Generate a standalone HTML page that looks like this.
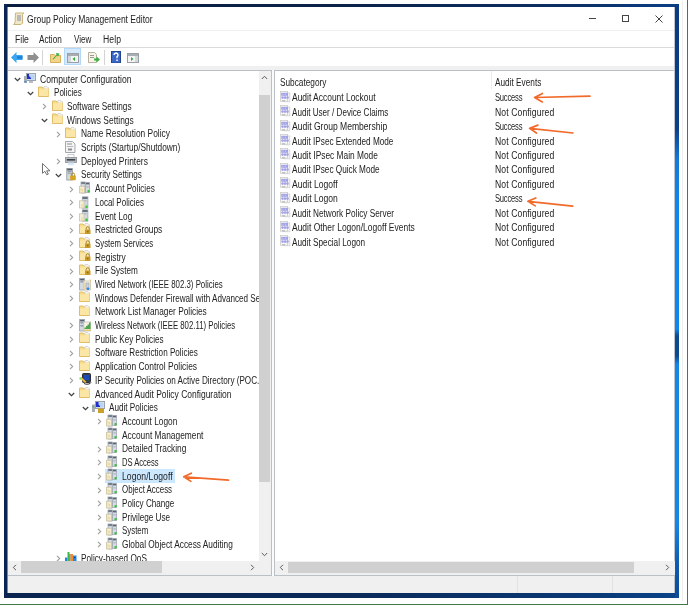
<!DOCTYPE html>
<html><head><meta charset="utf-8">
<style>
html,body{margin:0;padding:0;width:688px;height:605px;overflow:hidden;background:#fff;}
body{position:relative;font-family:"Liberation Sans",sans-serif;font-size:10px;letter-spacing:-0.27px;color:#1e1e1e;}
.a{position:absolute;}
.t{position:absolute;white-space:nowrap;line-height:13px;transform:scaleX(0.82);transform-origin:0 0;color:#222;}
</style></head><body>
<div class="a" style="left:687px;top:0;width:1px;height:605px;background:#3f7a48"></div>
<div class="a" style="left:0;top:604px;width:688px;height:1px;background:#3f7a48"></div>
<div class="a" style="left:682px;top:1px;width:1px;height:600px;background:#ededed"></div>
<!-- window frame -->
<div class="a" style="left:4px;top:4px;width:675px;height:3px;background:linear-gradient(90deg,#0b1d3f 0%,#0b2248 50%,#0b2f66 85%,#0a3f86 100%)"></div>
<div class="a" style="left:4px;top:4px;width:3px;height:594px;background:#0b2552"></div>
<div class="a" style="left:7px;top:7px;width:1px;height:586px;background:#7d8798"></div>
<div class="a" style="left:4px;top:593px;width:675px;height:5px;background:linear-gradient(90deg,#0b2450 0%,#0b2a58 50%,#0a3874 85%,#0a4488 100%)"></div>
<div class="a" style="left:675px;top:4px;width:4px;height:594px;background:linear-gradient(180deg,#0a3a80 0px,#0b3f88 125px,#137ad8 155px,#0f86ea 200px,#0f86ea 325px,#0c4a90 332px,#0c4a90 352px,#1486e6 360px,#1486e6 520px,#0d5cae 560px,#0a4a96 594px)"></div>
<div class="a" style="left:674px;top:7px;width:1px;height:586px;background:#7c8a9c;opacity:0.5"></div>
<div class="a" style="left:8px;top:7px;width:666px;height:586px;background:#fff;overflow:hidden">
  <!-- internal coords offset by 7 -->
  <div class="a" style="left:0;top:23px;width:668px;height:1px;background:#f0f0f0"></div>
  <div class="a" style="left:0;top:40px;width:668px;height:1px;background:#dadada"></div>
  <div class="a" style="left:0;top:59px;width:668px;height:4px;background:#f0f0f0"></div>
  <div class="a" style="left:0;top:569px;width:668px;height:17px;background:#f0f0f0"></div>
  <div class="a" style="left:509px;top:569px;width:1px;height:17px;background:#e2e2e2"></div>
  <div class="a" style="left:604px;top:569px;width:1px;height:17px;background:#e2e2e2"></div>
</div>
<div id="ov" style="position:absolute;left:0;top:0;width:688px;height:605px;will-change:transform">
<svg class="a" style="left:13px;top:12px" width="12" height="13" viewBox="0 0 12 13"><path d="M2.5 1 h8.5 l-1.5 1.5 v8.5 l-1.5 1.5 h-7.5 l1.5-1.5 z" fill="#f1e8c8" stroke="#c9b57a"/><rect x="4" y="3" width="4" height="6" fill="#b9b9b9"/></svg>
<div class="t" style="left:26.5px;top:12.5px;letter-spacing:0.000px;transform:scaleX(0.853);">Group Policy Management Editor</div>
<div class="a" style="left:589px;top:18px;width:7px;height:1px;background:#444"></div>
<div class="a" style="left:622px;top:15px;width:5px;height:5px;border:1px solid #444"></div>
<svg class="a" style="left:655px;top:15px" width="8" height="8" viewBox="0 0 8 8"><path d="M0.5 0.5 L7.5 7.5 M7.5 0.5 L0.5 7.5" stroke="#444" stroke-width="1"/></svg>
<div class="t" style="left:14.6px;top:33px;letter-spacing:0.000px;transform:scaleX(0.860);">File</div>
<div class="t" style="left:39px;top:33px;letter-spacing:0.000px;transform:scaleX(0.821);">Action</div>
<div class="t" style="left:74px;top:33px;letter-spacing:0.000px;transform:scaleX(0.809);">View</div>
<div class="t" style="left:103px;top:33px;letter-spacing:0.140px;transform:scaleX(0.860);">Help</div>
<svg class="a" style="left:11px;top:52px" width="12" height="11" viewBox="0 0 12 11"><path d="M0 5.5 L5.5 0 V3 H11.5 V8 H5.5 V11 Z" fill="#3aa6f2"/><rect x="6" y="4.2" width="5.5" height="2.5" fill="#1f7fd6"/></svg>
<svg class="a" style="left:27px;top:52px" width="12" height="11" viewBox="0 0 12 11"><path d="M12 5.5 L6.5 0 V3 H0.5 V8 H6.5 V11 Z" fill="#8f8f8f"/></svg>
<div class="a" style="left:42px;top:50px;width:1px;height:15px;background:#d4d4d4"></div>
<svg class="a" style="left:50px;top:52px" width="11" height="11" viewBox="0 0 11 11"><path d="M0.5 2.5 h4 l1 1 h5 v7 h-10 z" fill="#f3d58a" stroke="#d7b160"/><path d="M2.5 7 L6.5 3 L6 1 L9.5 1.5 L8 4.5 L7 3.5 L3.5 7.5 Z" fill="#3cb043"/></svg>
<div class="a" style="left:64px;top:48px;width:17px;height:17px;box-sizing:border-box;background:#d5ebfd;border:1px solid #b3d8f8"></div>
<svg class="a" style="left:67px;top:53px" width="12" height="10" viewBox="0 0 12 10"><rect x="0.5" y="0.5" width="11" height="9" fill="#f4f4f4" stroke="#9ba0a6"/><rect x="1" y="1" width="10" height="2" fill="#a9aeb4"/><rect x="1" y="3" width="3" height="6" fill="#d3d7db"/><path d="M8 4 L5.5 6 L8 8 Z" fill="#2fae3a"/></svg>
<svg class="a" style="left:88px;top:52px" width="12" height="11" viewBox="0 0 12 11"><path d="M0.5 0.5 h6 l2 2 v8 h-8 z" fill="#f7f3e6" stroke="#b9b2a0"/><rect x="2" y="3" width="4" height="1" fill="#9a9a9a"/><rect x="2" y="5" width="4" height="1" fill="#9a9a9a"/><path d="M6 6.5 h2.5 v-2 l3.5 3 l-3.5 3 v-2 h-2.5 z" fill="#3cb043"/></svg>
<div class="a" style="left:104px;top:50px;width:1px;height:15px;background:#d4d4d4"></div>
<svg class="a" style="left:111px;top:51px" width="10" height="12" viewBox="0 0 10 12"><rect x="0.5" y="0.5" width="9" height="11.5" fill="#3b68c6" stroke="#22448f"/><path d="M3 4 a2 2 0 1 1 3 1.8 v1.5" fill="none" stroke="#fff" stroke-width="1.4"/><rect x="5.3" y="8.5" width="1.5" height="1.5" fill="#fff"/></svg>
<svg class="a" style="left:127px;top:53px" width="12" height="10" viewBox="0 0 12 10"><rect x="0.5" y="0.5" width="11" height="9" fill="#f4f4f4" stroke="#9ba0a6"/><rect x="1" y="1" width="10" height="2" fill="#a9aeb4"/><rect x="8" y="3" width="3" height="6" fill="#d3d7db"/><path d="M4 4 L6.5 6 L4 8 Z" fill="#2fae3a"/></svg>
<div class="a" style="left:272px;top:70px;width:2px;height:506px;background:#fafafa"></div>
<div class="a" style="left:8px;top:70px;width:264px;height:506px;box-sizing:border-box;border:1px solid #b9c0c8;border-left:none"></div>
<div class="a" style="left:274px;top:70px;width:401px;height:506px;box-sizing:border-box;border:1px solid #b9c0c8;border-right:none"></div>
<div class="a" style="left:259px;top:71px;width:12px;height:490px;background:#f0f0f0"></div>
<div class="a" style="left:259px;top:95px;width:11px;height:387px;background:#d0d0d0"></div>
<svg class="a" style="left:261px;top:75px" width="7" height="5" viewBox="0 0 7 5"><path d="M0.8 4 L3.5 1.3 L6.2 4" fill="none" stroke="#5a5a5a" stroke-width="1.0"/></svg>
<svg class="a" style="left:261px;top:552px" width="7" height="5" viewBox="0 0 7 5"><path d="M0.8 1 L3.5 3.7 L6.2 1" fill="none" stroke="#5a5a5a" stroke-width="1.0"/></svg>
<div class="a" style="left:8px;top:561px;width:263px;height:14px;background:#f0f0f0"></div>
<div class="a" style="left:21px;top:561px;width:141px;height:12px;background:#d0d0d0"></div>
<svg class="a" style="left:12px;top:564px" width="5" height="7" viewBox="0 0 5 7"><path d="M4 0.8 L1.3 3.5 L4 6.2" fill="none" stroke="#5a5a5a" stroke-width="1.0"/></svg>
<svg class="a" style="left:250px;top:564px" width="5" height="7" viewBox="0 0 5 7"><path d="M1 0.8 L3.7 3.5 L1 6.2" fill="none" stroke="#5a5a5a" stroke-width="1.0"/></svg>
<div class="a" style="left:275px;top:561px;width:400px;height:14px;background:#f0f0f0"></div>
<div class="a" style="left:288px;top:562px;width:346px;height:11px;background:#d0d0d0"></div>
<svg class="a" style="left:279px;top:564px" width="5" height="7" viewBox="0 0 5 7"><path d="M4 0.8 L1.3 3.5 L4 6.2" fill="none" stroke="#5a5a5a" stroke-width="1.0"/></svg>
<svg class="a" style="left:665px;top:564px" width="5" height="7" viewBox="0 0 5 7"><path d="M1 0.8 L3.7 3.5 L1 6.2" fill="none" stroke="#5a5a5a" stroke-width="1.0"/></svg>
<div class="a" style="left:491px;top:71px;width:1px;height:18px;background:#ececec"></div>
<div class="t" style="left:280.2px;top:75.5px;letter-spacing:0.000px;transform:scaleX(0.827);">Subcategory</div>
<div class="t" style="left:495.3px;top:75.5px;letter-spacing:0.000px;transform:scaleX(0.825);">Audit Events</div><div class="a" style="left:7px;top:71px;width:252px;height:490px;overflow:hidden"><div class="a" style="left:-7px;top:-71px;width:688px;height:605px"><svg style="position:absolute;left:14px;top:77px" width="7" height="5" viewBox="0 0 7 5"><path d="M0.8 1 L3.5 3.7 L6.2 1" fill="none" stroke="#404040" stroke-width="1.2"/></svg>
<svg style="position:absolute;left:24px;top:73px" width="12" height="11" viewBox="0 0 12 11"><rect x="2.5" y="0.5" width="9" height="7" fill="#dfe6f0" stroke="#9aa3ad"/><rect x="3.5" y="1.5" width="7" height="5" fill="#b9d3f0"/><path d="M3 1 h2 v2 l2 2 v1 h-4 z" fill="#1f2fcc"/><rect x="0" y="3" width="3" height="7" fill="#a9aeb5"/><rect x="0.5" y="8" width="2" height="1.5" fill="#3c8ee8"/><rect x="5" y="8" width="4" height="2" fill="#b7bcc2"/></svg>
<div class="t" style="left:40.0px;top:72.6px;letter-spacing:0.013px;transform:scaleX(0.860);">Computer Configuration</div>
<svg style="position:absolute;left:27px;top:91px" width="7" height="5" viewBox="0 0 7 5"><path d="M0.8 1 L3.5 3.7 L6.2 1" fill="none" stroke="#404040" stroke-width="1.2"/></svg>
<svg style="position:absolute;left:38px;top:86px" width="12" height="11" viewBox="0 0 12 11"><path d="M0.5 1 h3.5 l1 1 h5.5 v8.5 h-10 z" fill="#f8dc86" stroke="#e0bd68" stroke-width="1"/><path d="M6 0.5 h3 l1.5 1.5 v1 h-4.5 z" fill="#f4f4f4" stroke="#c9c9c9" stroke-width="0.6"/><path d="M1 3.5 h4 l1-1 h4.5 v7.5 h-9.5 z" fill="#fbe6a6"/></svg>
<div class="t" style="left:53.7px;top:86.3px;letter-spacing:0.000px;transform:scaleX(0.806);">Policies</div>
<svg style="position:absolute;left:42px;top:103px" width="5" height="7" viewBox="0 0 5 7"><path d="M1 0.8 L3.7 3.5 L1 6.2" fill="none" stroke="#a0a0a0" stroke-width="1.1"/></svg>
<svg style="position:absolute;left:52px;top:100px" width="12" height="11" viewBox="0 0 12 11"><path d="M0.5 1 h3.5 l1 1 h5.5 v8.5 h-10 z" fill="#f8dc86" stroke="#e0bd68" stroke-width="1"/><path d="M6 0.5 h3 l1.5 1.5 v1 h-4.5 z" fill="#f4f4f4" stroke="#c9c9c9" stroke-width="0.6"/><path d="M1 3.5 h4 l1-1 h4.5 v7.5 h-9.5 z" fill="#fbe6a6"/></svg>
<div class="t" style="left:67.4px;top:100.0px;letter-spacing:0.000px;transform:scaleX(0.823);">Software Settings</div>
<svg style="position:absolute;left:41px;top:118px" width="7" height="5" viewBox="0 0 7 5"><path d="M0.8 1 L3.5 3.7 L6.2 1" fill="none" stroke="#404040" stroke-width="1.2"/></svg>
<svg style="position:absolute;left:52px;top:113px" width="12" height="11" viewBox="0 0 12 11"><path d="M0.5 1 h3.5 l1 1 h5.5 v8.5 h-10 z" fill="#f8dc86" stroke="#e0bd68" stroke-width="1"/><path d="M6 0.5 h3 l1.5 1.5 v1 h-4.5 z" fill="#f4f4f4" stroke="#c9c9c9" stroke-width="0.6"/><path d="M1 3.5 h4 l1-1 h4.5 v7.5 h-9.5 z" fill="#fbe6a6"/></svg>
<div class="t" style="left:67.4px;top:113.7px;letter-spacing:0.000px;transform:scaleX(0.839);">Windows Settings</div>
<svg style="position:absolute;left:56px;top:131px" width="5" height="7" viewBox="0 0 5 7"><path d="M1 0.8 L3.7 3.5 L1 6.2" fill="none" stroke="#a0a0a0" stroke-width="1.1"/></svg>
<svg style="position:absolute;left:65px;top:127px" width="12" height="11" viewBox="0 0 12 11"><path d="M0.5 1 h3.5 l1 1 h5.5 v8.5 h-10 z" fill="#f8dc86" stroke="#e0bd68" stroke-width="1"/><path d="M6 0.5 h3 l1.5 1.5 v1 h-4.5 z" fill="#f4f4f4" stroke="#c9c9c9" stroke-width="0.6"/><path d="M1 3.5 h4 l1-1 h4.5 v7.5 h-9.5 z" fill="#fbe6a6"/></svg>
<div class="t" style="left:81.1px;top:127.4px;letter-spacing:0.000px;transform:scaleX(0.838);">Name Resolution Policy</div>
<svg style="position:absolute;left:65px;top:141px" width="11" height="12" viewBox="0 0 11 12"><path d="M0.5 0.5 h7 l2.5 2.5 v8.5 h-9.5 z" fill="#f4f4f4" stroke="#a4a8ad"/><rect x="2" y="2.5" width="5" height="1" fill="#8c9096"/><rect x="2" y="5" width="6" height="1" fill="#b4b8bd"/><rect x="3" y="7.5" width="4" height="2" fill="#8c9096"/></svg>
<div class="t" style="left:81.1px;top:141.1px;letter-spacing:0.000px;transform:scaleX(0.830);">Scripts (Startup/Shutdown)</div>
<svg style="position:absolute;left:56px;top:158px" width="5" height="7" viewBox="0 0 5 7"><path d="M1 0.8 L3.7 3.5 L1 6.2" fill="none" stroke="#a0a0a0" stroke-width="1.1"/></svg>
<svg style="position:absolute;left:65px;top:154px" width="12" height="12" viewBox="0 0 12 12"><rect x="3" y="0.5" width="6" height="3" fill="#fff" stroke="#c0c4c8" stroke-width="0.8"/><rect x="0.4" y="3.5" width="11.2" height="5" fill="#b6bbc1" stroke="#8c9298" stroke-width="0.8"/><rect x="1.8" y="5" width="8.4" height="1.6" fill="#3e434a"/><rect x="3" y="8.5" width="6" height="2.8" fill="#d8e8f6"/></svg>
<div class="t" style="left:81.1px;top:154.7px;letter-spacing:0.000px;transform:scaleX(0.841);">Deployed Printers</div>
<svg style="position:absolute;left:55px;top:173px" width="7" height="5" viewBox="0 0 7 5"><path d="M0.8 1 L3.5 3.7 L6.2 1" fill="none" stroke="#404040" stroke-width="1.2"/></svg>
<svg style="position:absolute;left:65px;top:168px" width="12" height="13" viewBox="0 0 12 13"><rect x="1.8" y="0.4" width="5.6" height="11.6" fill="#d6dbe1" stroke="#8e969f" stroke-width="0.8"/><rect x="2.2" y="0.8" width="4.8" height="1.6" fill="#4e5662"/><rect x="2.6" y="3.4" width="4" height="0.9" fill="#6b7480"/><rect x="2.6" y="5.2" width="4" height="0.9" fill="#9aa3ad"/><rect x="5.2" y="7.6" width="5.6" height="4.6" rx="0.6" fill="#d4a521"/><path d="M6.4 7.8 v-1.2 a1.6 1.6 0 0 1 3.2 0 v1.2" fill="none" stroke="#b08616" stroke-width="1"/></svg>
<div class="t" style="left:81.1px;top:168.4px;letter-spacing:0.000px;transform:scaleX(0.812);">Security Settings</div>
<svg style="position:absolute;left:69px;top:186px" width="5" height="7" viewBox="0 0 5 7"><path d="M1 0.8 L3.7 3.5 L1 6.2" fill="none" stroke="#a0a0a0" stroke-width="1.1"/></svg>
<svg style="position:absolute;left:79px;top:181px" width="12" height="13" viewBox="0 0 12 13"><rect x="6.5" y="1.5" width="4" height="10" fill="#d6dce3" stroke="#a3abb5" stroke-width="0.8"/><rect x="6.8" y="1.8" width="3.4" height="1.6" fill="#5d6672"/><rect x="7.2" y="5.5" width="2.6" height="0.8" fill="#9aa4ae"/><rect x="2" y="1" width="4.2" height="11" fill="#cfd6de" stroke="#9fa8b2" stroke-width="0.8"/><rect x="2.3" y="1.3" width="3.6" height="1.5" fill="#5d6672"/><rect x="0.4" y="5.3" width="5" height="6.6" fill="#f4eedc" stroke="#cfc3a2" stroke-width="0.8"/><rect x="1.6" y="7" width="0.9" height="3.5" fill="#ecd27a"/><rect x="3.3" y="8" width="0.9" height="2.5" fill="#ecd27a"/><rect x="8.4" y="9" width="2.4" height="2.4" rx="0.8" fill="#3fc23f"/></svg>
<div class="t" style="left:94.8px;top:182.1px;letter-spacing:0.000px;transform:scaleX(0.814);">Account Policies</div>
<svg style="position:absolute;left:69px;top:199px" width="5" height="7" viewBox="0 0 5 7"><path d="M1 0.8 L3.7 3.5 L1 6.2" fill="none" stroke="#a0a0a0" stroke-width="1.1"/></svg>
<svg style="position:absolute;left:79px;top:196px" width="12" height="13" viewBox="0 0 12 13"><rect x="3.3" y="0.8" width="5.6" height="11.4" fill="#d3d9e0" stroke="#9fa8b2" stroke-width="0.8"/><rect x="3.6" y="1.1" width="5" height="1.8" fill="#5d6672"/><rect x="4.5" y="4.5" width="3" height="0.8" fill="#9aa4ae"/><rect x="0.4" y="4.8" width="4.6" height="7.2" fill="#f4eedc" stroke="#cfc3a2" stroke-width="0.8"/><rect x="2.6" y="8" width="0.9" height="3" fill="#ecd27a"/><rect x="6.3" y="9.6" width="2.4" height="2.4" rx="0.8" fill="#3fc23f"/></svg>
<div class="t" style="left:94.8px;top:195.8px;letter-spacing:0.000px;transform:scaleX(0.800);">Local Policies</div>
<svg style="position:absolute;left:69px;top:213px" width="5" height="7" viewBox="0 0 5 7"><path d="M1 0.8 L3.7 3.5 L1 6.2" fill="none" stroke="#a0a0a0" stroke-width="1.1"/></svg>
<svg style="position:absolute;left:79px;top:209px" width="12" height="13" viewBox="0 0 12 13"><rect x="3.3" y="0.8" width="5.6" height="11.4" fill="#d3d9e0" stroke="#9fa8b2" stroke-width="0.8"/><rect x="3.6" y="1.1" width="5" height="1.8" fill="#5d6672"/><rect x="4.5" y="4.5" width="3" height="0.8" fill="#9aa4ae"/><rect x="0.4" y="4.8" width="4.6" height="7.2" fill="#f4eedc" stroke="#cfc3a2" stroke-width="0.8"/><rect x="2.6" y="8" width="0.9" height="3" fill="#ecd27a"/><rect x="6.3" y="9.6" width="2.4" height="2.4" rx="0.8" fill="#3fc23f"/></svg>
<div class="t" style="left:94.8px;top:209.5px;letter-spacing:0.000px;transform:scaleX(0.827);">Event Log</div>
<svg style="position:absolute;left:69px;top:227px" width="5" height="7" viewBox="0 0 5 7"><path d="M1 0.8 L3.7 3.5 L1 6.2" fill="none" stroke="#a0a0a0" stroke-width="1.1"/></svg>
<svg style="position:absolute;left:79px;top:223px" width="12" height="11" viewBox="0 0 12 11"><path d="M0.5 1 h3.5 l1 1 h5.5 v8.5 h-10 z" fill="#f8dc86" stroke="#e0bd68" stroke-width="1"/><path d="M6 0.5 h3 l1.5 1.5 v1 h-4.5 z" fill="#f4f4f4" stroke="#c9c9c9" stroke-width="0.6"/><path d="M1 3.5 h4 l1-1 h4.5 v7.5 h-9.5 z" fill="#fbe6a6"/><rect x="6" y="6.5" width="5.5" height="4.5" fill="#c99a2a"/><path d="M7.2 6.5 v-1.2 a1.55 1.55 0 0 1 3.1 0 v1.2" fill="none" stroke="#9a7a2a" stroke-width="0.9"/><rect x="8.3" y="7.8" width="1" height="1.5" fill="#7a5a10"/></svg>
<div class="t" style="left:94.8px;top:223.2px;letter-spacing:0.000px;transform:scaleX(0.835);">Restricted Groups</div>
<svg style="position:absolute;left:69px;top:240px" width="5" height="7" viewBox="0 0 5 7"><path d="M1 0.8 L3.7 3.5 L1 6.2" fill="none" stroke="#a0a0a0" stroke-width="1.1"/></svg>
<svg style="position:absolute;left:79px;top:237px" width="12" height="11" viewBox="0 0 12 11"><path d="M0.5 1 h3.5 l1 1 h5.5 v8.5 h-10 z" fill="#f8dc86" stroke="#e0bd68" stroke-width="1"/><path d="M6 0.5 h3 l1.5 1.5 v1 h-4.5 z" fill="#f4f4f4" stroke="#c9c9c9" stroke-width="0.6"/><path d="M1 3.5 h4 l1-1 h4.5 v7.5 h-9.5 z" fill="#fbe6a6"/><rect x="6" y="6.5" width="5.5" height="4.5" fill="#c99a2a"/><path d="M7.2 6.5 v-1.2 a1.55 1.55 0 0 1 3.1 0 v1.2" fill="none" stroke="#9a7a2a" stroke-width="0.9"/><rect x="8.3" y="7.8" width="1" height="1.5" fill="#7a5a10"/></svg>
<div class="t" style="left:94.8px;top:236.9px;letter-spacing:0.000px;transform:scaleX(0.782);">System Services</div>
<svg style="position:absolute;left:69px;top:254px" width="5" height="7" viewBox="0 0 5 7"><path d="M1 0.8 L3.7 3.5 L1 6.2" fill="none" stroke="#a0a0a0" stroke-width="1.1"/></svg>
<svg style="position:absolute;left:79px;top:250px" width="12" height="11" viewBox="0 0 12 11"><path d="M0.5 1 h3.5 l1 1 h5.5 v8.5 h-10 z" fill="#f8dc86" stroke="#e0bd68" stroke-width="1"/><path d="M6 0.5 h3 l1.5 1.5 v1 h-4.5 z" fill="#f4f4f4" stroke="#c9c9c9" stroke-width="0.6"/><path d="M1 3.5 h4 l1-1 h4.5 v7.5 h-9.5 z" fill="#fbe6a6"/><rect x="6" y="6.5" width="5.5" height="4.5" fill="#c99a2a"/><path d="M7.2 6.5 v-1.2 a1.55 1.55 0 0 1 3.1 0 v1.2" fill="none" stroke="#9a7a2a" stroke-width="0.9"/><rect x="8.3" y="7.8" width="1" height="1.5" fill="#7a5a10"/></svg>
<div class="t" style="left:94.8px;top:250.6px;letter-spacing:0.000px;transform:scaleX(0.839);">Registry</div>
<svg style="position:absolute;left:69px;top:268px" width="5" height="7" viewBox="0 0 5 7"><path d="M1 0.8 L3.7 3.5 L1 6.2" fill="none" stroke="#a0a0a0" stroke-width="1.1"/></svg>
<svg style="position:absolute;left:79px;top:264px" width="12" height="11" viewBox="0 0 12 11"><path d="M0.5 1 h3.5 l1 1 h5.5 v8.5 h-10 z" fill="#f8dc86" stroke="#e0bd68" stroke-width="1"/><path d="M6 0.5 h3 l1.5 1.5 v1 h-4.5 z" fill="#f4f4f4" stroke="#c9c9c9" stroke-width="0.6"/><path d="M1 3.5 h4 l1-1 h4.5 v7.5 h-9.5 z" fill="#fbe6a6"/><rect x="6" y="6.5" width="5.5" height="4.5" fill="#c99a2a"/><path d="M7.2 6.5 v-1.2 a1.55 1.55 0 0 1 3.1 0 v1.2" fill="none" stroke="#9a7a2a" stroke-width="0.9"/><rect x="8.3" y="7.8" width="1" height="1.5" fill="#7a5a10"/></svg>
<div class="t" style="left:94.8px;top:264.3px;letter-spacing:0.000px;transform:scaleX(0.820);">File System</div>
<svg style="position:absolute;left:69px;top:281px" width="5" height="7" viewBox="0 0 5 7"><path d="M1 0.8 L3.7 3.5 L1 6.2" fill="none" stroke="#a0a0a0" stroke-width="1.1"/></svg>
<svg style="position:absolute;left:79px;top:278px" width="13" height="13" viewBox="0 0 13 13"><rect x="0.6" y="0.4" width="5" height="11.6" fill="#d4dae2" stroke="#9aa2ab" stroke-width="0.8"/><rect x="1.1" y="0.9" width="4" height="1.5" fill="#5a6270"/><rect x="1.4" y="3.4" width="3.4" height="0.9" fill="#6c7582"/><rect x="4.8" y="3" width="6.6" height="9" fill="#f7f2e6" stroke="#cdc4aa" stroke-width="0.8"/><rect x="7" y="5" width="3" height="6" fill="#c9d3de" stroke="#9aa2ab" stroke-width="0.6"/><circle cx="9" cy="10.8" r="1.4" fill="#2f86e0"/><path d="M6 11.5 V4.5 M11.5 3 a1.5 1.5 0 0 0 -1 -1.8" fill="none" stroke="#e3c66a" stroke-width="0.9"/></svg>
<div class="t" style="left:94.8px;top:277.9px;letter-spacing:0.000px;transform:scaleX(0.784);">Wired Network (IEEE 802.3) Policies</div>
<svg style="position:absolute;left:69px;top:295px" width="5" height="7" viewBox="0 0 5 7"><path d="M1 0.8 L3.7 3.5 L1 6.2" fill="none" stroke="#a0a0a0" stroke-width="1.1"/></svg>
<svg style="position:absolute;left:79px;top:291px" width="12" height="11" viewBox="0 0 12 11"><path d="M0.5 1 h3.5 l1 1 h5.5 v8.5 h-10 z" fill="#f8dc86" stroke="#e0bd68" stroke-width="1"/><path d="M6 0.5 h3 l1.5 1.5 v1 h-4.5 z" fill="#f4f4f4" stroke="#c9c9c9" stroke-width="0.6"/><path d="M1 3.5 h4 l1-1 h4.5 v7.5 h-9.5 z" fill="#fbe6a6"/></svg>
<div class="t" style="left:94.8px;top:291.6px;letter-spacing:0.000px;transform:scaleX(0.810);">Windows Defender Firewall with Advanced Security</div>
<svg style="position:absolute;left:79px;top:305px" width="12" height="11" viewBox="0 0 12 11"><path d="M0.5 1 h3.5 l1 1 h5.5 v8.5 h-10 z" fill="#f8dc86" stroke="#e0bd68" stroke-width="1"/><path d="M6 0.5 h3 l1.5 1.5 v1 h-4.5 z" fill="#f4f4f4" stroke="#c9c9c9" stroke-width="0.6"/><path d="M1 3.5 h4 l1-1 h4.5 v7.5 h-9.5 z" fill="#fbe6a6"/></svg>
<div class="t" style="left:94.8px;top:305.3px;letter-spacing:0.000px;transform:scaleX(0.831);">Network List Manager Policies</div>
<svg style="position:absolute;left:69px;top:322px" width="5" height="7" viewBox="0 0 5 7"><path d="M1 0.8 L3.7 3.5 L1 6.2" fill="none" stroke="#a0a0a0" stroke-width="1.1"/></svg>
<svg style="position:absolute;left:79px;top:319px" width="13" height="13" viewBox="0 0 13 13"><rect x="0.6" y="0.4" width="5" height="11.6" fill="#d4dae2" stroke="#9aa2ab" stroke-width="0.8"/><rect x="1.1" y="0.9" width="4" height="1.5" fill="#5a6270"/><rect x="1.4" y="3.4" width="3.4" height="0.9" fill="#6c7582"/><rect x="1.4" y="6.4" width="3.4" height="0.9" fill="#6c7582"/><rect x="4.8" y="3" width="6.8" height="9" fill="#f4f1ea" stroke="#c9c2b0" stroke-width="0.8"/><path d="M5.5 10 V8.5 H7 V7 H8.5 V5.5 H10 V3.8 L11.5 3.3 V10 Z" fill="#4aa84a"/><rect x="5.2" y="10.6" width="6.2" height="1.2" fill="#e6c25a"/></svg>
<div class="t" style="left:94.8px;top:319.0px;letter-spacing:0.000px;transform:scaleX(0.779);">Wireless Network (IEEE 802.11) Policies</div>
<svg style="position:absolute;left:69px;top:336px" width="5" height="7" viewBox="0 0 5 7"><path d="M1 0.8 L3.7 3.5 L1 6.2" fill="none" stroke="#a0a0a0" stroke-width="1.1"/></svg>
<svg style="position:absolute;left:79px;top:332px" width="12" height="11" viewBox="0 0 12 11"><path d="M0.5 1 h3.5 l1 1 h5.5 v8.5 h-10 z" fill="#f8dc86" stroke="#e0bd68" stroke-width="1"/><path d="M6 0.5 h3 l1.5 1.5 v1 h-4.5 z" fill="#f4f4f4" stroke="#c9c9c9" stroke-width="0.6"/><path d="M1 3.5 h4 l1-1 h4.5 v7.5 h-9.5 z" fill="#fbe6a6"/></svg>
<div class="t" style="left:94.8px;top:332.7px;letter-spacing:0.000px;transform:scaleX(0.811);">Public Key Policies</div>
<svg style="position:absolute;left:69px;top:350px" width="5" height="7" viewBox="0 0 5 7"><path d="M1 0.8 L3.7 3.5 L1 6.2" fill="none" stroke="#a0a0a0" stroke-width="1.1"/></svg>
<svg style="position:absolute;left:79px;top:346px" width="12" height="11" viewBox="0 0 12 11"><path d="M0.5 1 h3.5 l1 1 h5.5 v8.5 h-10 z" fill="#f8dc86" stroke="#e0bd68" stroke-width="1"/><path d="M6 0.5 h3 l1.5 1.5 v1 h-4.5 z" fill="#f4f4f4" stroke="#c9c9c9" stroke-width="0.6"/><path d="M1 3.5 h4 l1-1 h4.5 v7.5 h-9.5 z" fill="#fbe6a6"/></svg>
<div class="t" style="left:94.8px;top:346.4px;letter-spacing:0.000px;transform:scaleX(0.812);">Software Restriction Policies</div>
<svg style="position:absolute;left:69px;top:363px" width="5" height="7" viewBox="0 0 5 7"><path d="M1 0.8 L3.7 3.5 L1 6.2" fill="none" stroke="#a0a0a0" stroke-width="1.1"/></svg>
<svg style="position:absolute;left:79px;top:360px" width="12" height="11" viewBox="0 0 12 11"><path d="M0.5 1 h3.5 l1 1 h5.5 v8.5 h-10 z" fill="#f8dc86" stroke="#e0bd68" stroke-width="1"/><path d="M6 0.5 h3 l1.5 1.5 v1 h-4.5 z" fill="#f4f4f4" stroke="#c9c9c9" stroke-width="0.6"/><path d="M1 3.5 h4 l1-1 h4.5 v7.5 h-9.5 z" fill="#fbe6a6"/></svg>
<div class="t" style="left:94.8px;top:360.1px;letter-spacing:0.000px;transform:scaleX(0.842);">Application Control Policies</div>
<svg style="position:absolute;left:69px;top:377px" width="5" height="7" viewBox="0 0 5 7"><path d="M1 0.8 L3.7 3.5 L1 6.2" fill="none" stroke="#a0a0a0" stroke-width="1.1"/></svg>
<svg style="position:absolute;left:79px;top:373px" width="13" height="12" viewBox="0 0 13 12"><rect x="3.5" y="0.5" width="8" height="9" rx="1" fill="#3a3f48" stroke="#2a2e35"/><rect x="5" y="2" width="5" height="5" fill="#1e48b5"/><path d="M5 10.5 a4 2 0 0 0 7 -1" fill="none" stroke="#2a2e35" stroke-width="1"/><path d="M0.5 5 L6 10 L7.5 9 L2.5 4 Z" fill="#e8c23a"/><rect x="0.5" y="4.5" width="2" height="2" fill="#7bd35a"/></svg>
<div class="t" style="left:94.8px;top:373.8px;letter-spacing:0.000px;transform:scaleX(0.813);">IP Security Policies on Active Directory (POC.LOCAL)</div>
<svg style="position:absolute;left:68px;top:392px" width="7" height="5" viewBox="0 0 7 5"><path d="M0.8 1 L3.5 3.7 L6.2 1" fill="none" stroke="#404040" stroke-width="1.2"/></svg>
<svg style="position:absolute;left:79px;top:387px" width="12" height="11" viewBox="0 0 12 11"><path d="M0.5 1 h3.5 l1 1 h5.5 v8.5 h-10 z" fill="#f8dc86" stroke="#e0bd68" stroke-width="1"/><path d="M6 0.5 h3 l1.5 1.5 v1 h-4.5 z" fill="#f4f4f4" stroke="#c9c9c9" stroke-width="0.6"/><path d="M1 3.5 h4 l1-1 h4.5 v7.5 h-9.5 z" fill="#fbe6a6"/></svg>
<div class="t" style="left:94.8px;top:387.5px;letter-spacing:0.000px;transform:scaleX(0.847);">Advanced Audit Policy Configuration</div>
<svg style="position:absolute;left:82px;top:406px" width="7" height="5" viewBox="0 0 7 5"><path d="M0.8 1 L3.5 3.7 L6.2 1" fill="none" stroke="#404040" stroke-width="1.2"/></svg>
<svg style="position:absolute;left:92px;top:401px" width="13" height="12" viewBox="0 0 13 12"><rect x="3.5" y="0.5" width="9" height="7" fill="#dfe6f0" stroke="#9aa3ad"/><rect x="4.5" y="1.5" width="7" height="5" fill="#b9d3f0"/><path d="M4 1 h2.5 v2.5 l1.5 1.5 v1 h-4 z" fill="#1f2fcc"/><rect x="0" y="3.5" width="3" height="7.5" fill="#a9aeb5"/><rect x="0.5" y="5" width="1.5" height="1.5" fill="#41c14a"/><rect x="6" y="7.5" width="6" height="4.5" fill="#c9a227"/></svg>
<div class="t" style="left:108.5px;top:401.2px;letter-spacing:0.000px;transform:scaleX(0.815);">Audit Policies</div>
<svg style="position:absolute;left:97px;top:418px" width="5" height="7" viewBox="0 0 5 7"><path d="M1 0.8 L3.7 3.5 L1 6.2" fill="none" stroke="#a0a0a0" stroke-width="1.1"/></svg>
<svg style="position:absolute;left:106px;top:414px" width="12" height="13" viewBox="0 0 12 13"><rect x="6.5" y="1.5" width="4" height="10" fill="#d6dce3" stroke="#a3abb5" stroke-width="0.8"/><rect x="6.8" y="1.8" width="3.4" height="1.6" fill="#5d6672"/><rect x="7.2" y="5.5" width="2.6" height="0.8" fill="#9aa4ae"/><rect x="2" y="1" width="4.2" height="11" fill="#cfd6de" stroke="#9fa8b2" stroke-width="0.8"/><rect x="2.3" y="1.3" width="3.6" height="1.5" fill="#5d6672"/><rect x="0.4" y="5.3" width="5" height="6.6" fill="#f4eedc" stroke="#cfc3a2" stroke-width="0.8"/><rect x="1.6" y="7" width="0.9" height="3.5" fill="#ecd27a"/><rect x="3.3" y="8" width="0.9" height="2.5" fill="#ecd27a"/><rect x="8.4" y="9" width="2.4" height="2.4" rx="0.8" fill="#3fc23f"/></svg>
<div class="t" style="left:122.2px;top:414.9px;letter-spacing:0.000px;transform:scaleX(0.828);">Account Logon</div>
<svg style="position:absolute;left:106px;top:427px" width="12" height="13" viewBox="0 0 12 13"><rect x="6.5" y="1.5" width="4" height="10" fill="#d6dce3" stroke="#a3abb5" stroke-width="0.8"/><rect x="6.8" y="1.8" width="3.4" height="1.6" fill="#5d6672"/><rect x="7.2" y="5.5" width="2.6" height="0.8" fill="#9aa4ae"/><rect x="2" y="1" width="4.2" height="11" fill="#cfd6de" stroke="#9fa8b2" stroke-width="0.8"/><rect x="2.3" y="1.3" width="3.6" height="1.5" fill="#5d6672"/><rect x="0.4" y="5.3" width="5" height="6.6" fill="#f4eedc" stroke="#cfc3a2" stroke-width="0.8"/><rect x="1.6" y="7" width="0.9" height="3.5" fill="#ecd27a"/><rect x="3.3" y="8" width="0.9" height="2.5" fill="#ecd27a"/><rect x="8.4" y="9" width="2.4" height="2.4" rx="0.8" fill="#3fc23f"/></svg>
<div class="t" style="left:122.2px;top:428.5px;letter-spacing:0.000px;transform:scaleX(0.837);">Account Management</div>
<svg style="position:absolute;left:97px;top:446px" width="5" height="7" viewBox="0 0 5 7"><path d="M1 0.8 L3.7 3.5 L1 6.2" fill="none" stroke="#a0a0a0" stroke-width="1.1"/></svg>
<svg style="position:absolute;left:106px;top:441px" width="12" height="13" viewBox="0 0 12 13"><rect x="6.5" y="1.5" width="4" height="10" fill="#d6dce3" stroke="#a3abb5" stroke-width="0.8"/><rect x="6.8" y="1.8" width="3.4" height="1.6" fill="#5d6672"/><rect x="7.2" y="5.5" width="2.6" height="0.8" fill="#9aa4ae"/><rect x="2" y="1" width="4.2" height="11" fill="#cfd6de" stroke="#9fa8b2" stroke-width="0.8"/><rect x="2.3" y="1.3" width="3.6" height="1.5" fill="#5d6672"/><rect x="0.4" y="5.3" width="5" height="6.6" fill="#f4eedc" stroke="#cfc3a2" stroke-width="0.8"/><rect x="1.6" y="7" width="0.9" height="3.5" fill="#ecd27a"/><rect x="3.3" y="8" width="0.9" height="2.5" fill="#ecd27a"/><rect x="8.4" y="9" width="2.4" height="2.4" rx="0.8" fill="#3fc23f"/></svg>
<div class="t" style="left:122.2px;top:442.2px;letter-spacing:0.000px;transform:scaleX(0.833);">Detailed Tracking</div>
<svg style="position:absolute;left:97px;top:459px" width="5" height="7" viewBox="0 0 5 7"><path d="M1 0.8 L3.7 3.5 L1 6.2" fill="none" stroke="#a0a0a0" stroke-width="1.1"/></svg>
<svg style="position:absolute;left:106px;top:455px" width="12" height="13" viewBox="0 0 12 13"><rect x="6.5" y="1.5" width="4" height="10" fill="#d6dce3" stroke="#a3abb5" stroke-width="0.8"/><rect x="6.8" y="1.8" width="3.4" height="1.6" fill="#5d6672"/><rect x="7.2" y="5.5" width="2.6" height="0.8" fill="#9aa4ae"/><rect x="2" y="1" width="4.2" height="11" fill="#cfd6de" stroke="#9fa8b2" stroke-width="0.8"/><rect x="2.3" y="1.3" width="3.6" height="1.5" fill="#5d6672"/><rect x="0.4" y="5.3" width="5" height="6.6" fill="#f4eedc" stroke="#cfc3a2" stroke-width="0.8"/><rect x="1.6" y="7" width="0.9" height="3.5" fill="#ecd27a"/><rect x="3.3" y="8" width="0.9" height="2.5" fill="#ecd27a"/><rect x="8.4" y="9" width="2.4" height="2.4" rx="0.8" fill="#3fc23f"/></svg>
<div class="t" style="left:122.2px;top:455.9px;letter-spacing:-0.020px;transform:scaleX(0.760);">DS Access</div>
<div style="position:absolute;left:105px;top:468.8px;width:70px;height:14px;background:#cce8ff"></div>
<svg style="position:absolute;left:97px;top:473px" width="5" height="7" viewBox="0 0 5 7"><path d="M1 0.8 L3.7 3.5 L1 6.2" fill="none" stroke="#a0a0a0" stroke-width="1.1"/></svg>
<svg style="position:absolute;left:106px;top:468px" width="12" height="13" viewBox="0 0 12 13"><rect x="6.5" y="1.5" width="4" height="10" fill="#d6dce3" stroke="#a3abb5" stroke-width="0.8"/><rect x="6.8" y="1.8" width="3.4" height="1.6" fill="#5d6672"/><rect x="7.2" y="5.5" width="2.6" height="0.8" fill="#9aa4ae"/><rect x="2" y="1" width="4.2" height="11" fill="#cfd6de" stroke="#9fa8b2" stroke-width="0.8"/><rect x="2.3" y="1.3" width="3.6" height="1.5" fill="#5d6672"/><rect x="0.4" y="5.3" width="5" height="6.6" fill="#f4eedc" stroke="#cfc3a2" stroke-width="0.8"/><rect x="1.6" y="7" width="0.9" height="3.5" fill="#ecd27a"/><rect x="3.3" y="8" width="0.9" height="2.5" fill="#ecd27a"/><rect x="8.4" y="9" width="2.4" height="2.4" rx="0.8" fill="#3fc23f"/></svg>
<div class="t" style="left:122.2px;top:469.6px;letter-spacing:0.055px;transform:scaleX(0.860);">Logon/Logoff</div>
<svg style="position:absolute;left:97px;top:487px" width="5" height="7" viewBox="0 0 5 7"><path d="M1 0.8 L3.7 3.5 L1 6.2" fill="none" stroke="#a0a0a0" stroke-width="1.1"/></svg>
<svg style="position:absolute;left:106px;top:482px" width="12" height="13" viewBox="0 0 12 13"><rect x="6.5" y="1.5" width="4" height="10" fill="#d6dce3" stroke="#a3abb5" stroke-width="0.8"/><rect x="6.8" y="1.8" width="3.4" height="1.6" fill="#5d6672"/><rect x="7.2" y="5.5" width="2.6" height="0.8" fill="#9aa4ae"/><rect x="2" y="1" width="4.2" height="11" fill="#cfd6de" stroke="#9fa8b2" stroke-width="0.8"/><rect x="2.3" y="1.3" width="3.6" height="1.5" fill="#5d6672"/><rect x="0.4" y="5.3" width="5" height="6.6" fill="#f4eedc" stroke="#cfc3a2" stroke-width="0.8"/><rect x="1.6" y="7" width="0.9" height="3.5" fill="#ecd27a"/><rect x="3.3" y="8" width="0.9" height="2.5" fill="#ecd27a"/><rect x="8.4" y="9" width="2.4" height="2.4" rx="0.8" fill="#3fc23f"/></svg>
<div class="t" style="left:122.2px;top:483.3px;letter-spacing:0.000px;transform:scaleX(0.790);">Object Access</div>
<svg style="position:absolute;left:97px;top:500px" width="5" height="7" viewBox="0 0 5 7"><path d="M1 0.8 L3.7 3.5 L1 6.2" fill="none" stroke="#a0a0a0" stroke-width="1.1"/></svg>
<svg style="position:absolute;left:106px;top:496px" width="12" height="13" viewBox="0 0 12 13"><rect x="6.5" y="1.5" width="4" height="10" fill="#d6dce3" stroke="#a3abb5" stroke-width="0.8"/><rect x="6.8" y="1.8" width="3.4" height="1.6" fill="#5d6672"/><rect x="7.2" y="5.5" width="2.6" height="0.8" fill="#9aa4ae"/><rect x="2" y="1" width="4.2" height="11" fill="#cfd6de" stroke="#9fa8b2" stroke-width="0.8"/><rect x="2.3" y="1.3" width="3.6" height="1.5" fill="#5d6672"/><rect x="0.4" y="5.3" width="5" height="6.6" fill="#f4eedc" stroke="#cfc3a2" stroke-width="0.8"/><rect x="1.6" y="7" width="0.9" height="3.5" fill="#ecd27a"/><rect x="3.3" y="8" width="0.9" height="2.5" fill="#ecd27a"/><rect x="8.4" y="9" width="2.4" height="2.4" rx="0.8" fill="#3fc23f"/></svg>
<div class="t" style="left:122.2px;top:497.0px;letter-spacing:0.000px;transform:scaleX(0.811);">Policy Change</div>
<svg style="position:absolute;left:97px;top:514px" width="5" height="7" viewBox="0 0 5 7"><path d="M1 0.8 L3.7 3.5 L1 6.2" fill="none" stroke="#a0a0a0" stroke-width="1.1"/></svg>
<svg style="position:absolute;left:106px;top:509px" width="12" height="13" viewBox="0 0 12 13"><rect x="6.5" y="1.5" width="4" height="10" fill="#d6dce3" stroke="#a3abb5" stroke-width="0.8"/><rect x="6.8" y="1.8" width="3.4" height="1.6" fill="#5d6672"/><rect x="7.2" y="5.5" width="2.6" height="0.8" fill="#9aa4ae"/><rect x="2" y="1" width="4.2" height="11" fill="#cfd6de" stroke="#9fa8b2" stroke-width="0.8"/><rect x="2.3" y="1.3" width="3.6" height="1.5" fill="#5d6672"/><rect x="0.4" y="5.3" width="5" height="6.6" fill="#f4eedc" stroke="#cfc3a2" stroke-width="0.8"/><rect x="1.6" y="7" width="0.9" height="3.5" fill="#ecd27a"/><rect x="3.3" y="8" width="0.9" height="2.5" fill="#ecd27a"/><rect x="8.4" y="9" width="2.4" height="2.4" rx="0.8" fill="#3fc23f"/></svg>
<div class="t" style="left:122.2px;top:510.7px;letter-spacing:0.000px;transform:scaleX(0.817);">Privilege Use</div>
<svg style="position:absolute;left:97px;top:528px" width="5" height="7" viewBox="0 0 5 7"><path d="M1 0.8 L3.7 3.5 L1 6.2" fill="none" stroke="#a0a0a0" stroke-width="1.1"/></svg>
<svg style="position:absolute;left:106px;top:523px" width="12" height="13" viewBox="0 0 12 13"><rect x="6.5" y="1.5" width="4" height="10" fill="#d6dce3" stroke="#a3abb5" stroke-width="0.8"/><rect x="6.8" y="1.8" width="3.4" height="1.6" fill="#5d6672"/><rect x="7.2" y="5.5" width="2.6" height="0.8" fill="#9aa4ae"/><rect x="2" y="1" width="4.2" height="11" fill="#cfd6de" stroke="#9fa8b2" stroke-width="0.8"/><rect x="2.3" y="1.3" width="3.6" height="1.5" fill="#5d6672"/><rect x="0.4" y="5.3" width="5" height="6.6" fill="#f4eedc" stroke="#cfc3a2" stroke-width="0.8"/><rect x="1.6" y="7" width="0.9" height="3.5" fill="#ecd27a"/><rect x="3.3" y="8" width="0.9" height="2.5" fill="#ecd27a"/><rect x="8.4" y="9" width="2.4" height="2.4" rx="0.8" fill="#3fc23f"/></svg>
<div class="t" style="left:122.2px;top:524.4px;letter-spacing:0.000px;transform:scaleX(0.788);">System</div>
<svg style="position:absolute;left:97px;top:541px" width="5" height="7" viewBox="0 0 5 7"><path d="M1 0.8 L3.7 3.5 L1 6.2" fill="none" stroke="#a0a0a0" stroke-width="1.1"/></svg>
<svg style="position:absolute;left:106px;top:537px" width="12" height="13" viewBox="0 0 12 13"><rect x="6.5" y="1.5" width="4" height="10" fill="#d6dce3" stroke="#a3abb5" stroke-width="0.8"/><rect x="6.8" y="1.8" width="3.4" height="1.6" fill="#5d6672"/><rect x="7.2" y="5.5" width="2.6" height="0.8" fill="#9aa4ae"/><rect x="2" y="1" width="4.2" height="11" fill="#cfd6de" stroke="#9fa8b2" stroke-width="0.8"/><rect x="2.3" y="1.3" width="3.6" height="1.5" fill="#5d6672"/><rect x="0.4" y="5.3" width="5" height="6.6" fill="#f4eedc" stroke="#cfc3a2" stroke-width="0.8"/><rect x="1.6" y="7" width="0.9" height="3.5" fill="#ecd27a"/><rect x="3.3" y="8" width="0.9" height="2.5" fill="#ecd27a"/><rect x="8.4" y="9" width="2.4" height="2.4" rx="0.8" fill="#3fc23f"/></svg>
<div class="t" style="left:122.2px;top:538.1px;letter-spacing:0.000px;transform:scaleX(0.831);">Global Object Access Auditing</div>
<svg style="position:absolute;left:56px;top:555px" width="5" height="7" viewBox="0 0 5 7"><path d="M1 0.8 L3.7 3.5 L1 6.2" fill="none" stroke="#a0a0a0" stroke-width="1.1"/></svg>
<svg style="position:absolute;left:65px;top:552px" width="12" height="10" viewBox="0 0 12 10"><rect x="0" y="5.5" width="2.5" height="4.5" fill="#1e88e5"/><rect x="2.5" y="0" width="2" height="10" fill="#43b649"/><rect x="4.5" y="2" width="1" height="8" fill="#5a5f66"/><rect x="5.5" y="2" width="2.5" height="8" fill="#f28b30"/><rect x="8" y="3.5" width="3.5" height="6.5" fill="#1e88e5"/><rect x="9" y="5" width="1.5" height="1" fill="#0d47a1"/></svg>
<div class="t" style="left:81.1px;top:551.7px;letter-spacing:0.000px;transform:scaleX(0.823);">Policy-based QoS</div></div></div><svg style="position:absolute;left:280px;top:91px" width="11" height="12" viewBox="0 0 11 12"><rect x="5" y="2" width="4.8" height="8.8" fill="#f3f3f3" stroke="#d2d2d2" stroke-width="0.8"/><rect x="0.4" y="0.4" width="7.2" height="9.8" fill="#f7f7f7" stroke="#cdcdcd" stroke-width="0.8"/><rect x="1.2" y="1.8" width="6.8" height="3" fill="#a2a2e6"/><rect x="2.6" y="2.8" width="0.8" height="0.8" fill="#e6e6fa"/><rect x="5" y="2.8" width="0.8" height="0.8" fill="#e6e6fa"/><circle cx="2.5" cy="6.6" r="1.3" fill="#a2a2e6"/><circle cx="5" cy="6.6" r="1.3" fill="#a2a2e6"/><circle cx="7.5" cy="6.6" r="1.3" fill="#a2a2e6"/><rect x="2" y="9.5" width="3" height="0.8" fill="#9a9a9a"/></svg>
<div class="t" style="left:291.5px;top:91.2px;letter-spacing:0.000px;transform:scaleX(0.844);">Audit Account Lockout</div>
<div class="t" style="left:495.3px;top:91.2px;letter-spacing:-0.281px;transform:scaleX(0.760);">Success</div>
<svg style="position:absolute;left:280px;top:105px" width="11" height="12" viewBox="0 0 11 12"><rect x="5" y="2" width="4.8" height="8.8" fill="#f3f3f3" stroke="#d2d2d2" stroke-width="0.8"/><rect x="0.4" y="0.4" width="7.2" height="9.8" fill="#f7f7f7" stroke="#cdcdcd" stroke-width="0.8"/><rect x="1.2" y="1.8" width="6.8" height="3" fill="#a2a2e6"/><rect x="2.6" y="2.8" width="0.8" height="0.8" fill="#e6e6fa"/><rect x="5" y="2.8" width="0.8" height="0.8" fill="#e6e6fa"/><circle cx="2.5" cy="6.6" r="1.3" fill="#a2a2e6"/><circle cx="5" cy="6.6" r="1.3" fill="#a2a2e6"/><circle cx="7.5" cy="6.6" r="1.3" fill="#a2a2e6"/><rect x="2" y="9.5" width="3" height="0.8" fill="#9a9a9a"/></svg>
<div class="t" style="left:291.5px;top:105.6px;letter-spacing:-0.000px;transform:scaleX(0.810);">Audit User / Device Claims</div>
<div class="t" style="left:495.3px;top:105.6px;letter-spacing:0.129px;transform:scaleX(0.860);">Not Configured</div>
<svg style="position:absolute;left:280px;top:120px" width="11" height="12" viewBox="0 0 11 12"><rect x="5" y="2" width="4.8" height="8.8" fill="#f3f3f3" stroke="#d2d2d2" stroke-width="0.8"/><rect x="0.4" y="0.4" width="7.2" height="9.8" fill="#f7f7f7" stroke="#cdcdcd" stroke-width="0.8"/><rect x="1.2" y="1.8" width="6.8" height="3" fill="#a2a2e6"/><rect x="2.6" y="2.8" width="0.8" height="0.8" fill="#e6e6fa"/><rect x="5" y="2.8" width="0.8" height="0.8" fill="#e6e6fa"/><circle cx="2.5" cy="6.6" r="1.3" fill="#a2a2e6"/><circle cx="5" cy="6.6" r="1.3" fill="#a2a2e6"/><circle cx="7.5" cy="6.6" r="1.3" fill="#a2a2e6"/><rect x="2" y="9.5" width="3" height="0.8" fill="#9a9a9a"/></svg>
<div class="t" style="left:291.5px;top:120.1px;letter-spacing:0.000px;transform:scaleX(0.856);">Audit Group Membership</div>
<div class="t" style="left:495.3px;top:120.1px;letter-spacing:-0.281px;transform:scaleX(0.760);">Success</div>
<svg style="position:absolute;left:280px;top:134px" width="11" height="12" viewBox="0 0 11 12"><rect x="5" y="2" width="4.8" height="8.8" fill="#f3f3f3" stroke="#d2d2d2" stroke-width="0.8"/><rect x="0.4" y="0.4" width="7.2" height="9.8" fill="#f7f7f7" stroke="#cdcdcd" stroke-width="0.8"/><rect x="1.2" y="1.8" width="6.8" height="3" fill="#a2a2e6"/><rect x="2.6" y="2.8" width="0.8" height="0.8" fill="#e6e6fa"/><rect x="5" y="2.8" width="0.8" height="0.8" fill="#e6e6fa"/><circle cx="2.5" cy="6.6" r="1.3" fill="#a2a2e6"/><circle cx="5" cy="6.6" r="1.3" fill="#a2a2e6"/><circle cx="7.5" cy="6.6" r="1.3" fill="#a2a2e6"/><rect x="2" y="9.5" width="3" height="0.8" fill="#9a9a9a"/></svg>
<div class="t" style="left:291.5px;top:134.5px;letter-spacing:0.000px;transform:scaleX(0.822);">Audit IPsec Extended Mode</div>
<div class="t" style="left:495.3px;top:134.5px;letter-spacing:0.129px;transform:scaleX(0.860);">Not Configured</div>
<svg style="position:absolute;left:280px;top:148px" width="11" height="12" viewBox="0 0 11 12"><rect x="5" y="2" width="4.8" height="8.8" fill="#f3f3f3" stroke="#d2d2d2" stroke-width="0.8"/><rect x="0.4" y="0.4" width="7.2" height="9.8" fill="#f7f7f7" stroke="#cdcdcd" stroke-width="0.8"/><rect x="1.2" y="1.8" width="6.8" height="3" fill="#a2a2e6"/><rect x="2.6" y="2.8" width="0.8" height="0.8" fill="#e6e6fa"/><rect x="5" y="2.8" width="0.8" height="0.8" fill="#e6e6fa"/><circle cx="2.5" cy="6.6" r="1.3" fill="#a2a2e6"/><circle cx="5" cy="6.6" r="1.3" fill="#a2a2e6"/><circle cx="7.5" cy="6.6" r="1.3" fill="#a2a2e6"/><rect x="2" y="9.5" width="3" height="0.8" fill="#9a9a9a"/></svg>
<div class="t" style="left:291.5px;top:149.0px;letter-spacing:0.000px;transform:scaleX(0.835);">Audit IPsec Main Mode</div>
<div class="t" style="left:495.3px;top:149.0px;letter-spacing:0.129px;transform:scaleX(0.860);">Not Configured</div>
<svg style="position:absolute;left:280px;top:163px" width="11" height="12" viewBox="0 0 11 12"><rect x="5" y="2" width="4.8" height="8.8" fill="#f3f3f3" stroke="#d2d2d2" stroke-width="0.8"/><rect x="0.4" y="0.4" width="7.2" height="9.8" fill="#f7f7f7" stroke="#cdcdcd" stroke-width="0.8"/><rect x="1.2" y="1.8" width="6.8" height="3" fill="#a2a2e6"/><rect x="2.6" y="2.8" width="0.8" height="0.8" fill="#e6e6fa"/><rect x="5" y="2.8" width="0.8" height="0.8" fill="#e6e6fa"/><circle cx="2.5" cy="6.6" r="1.3" fill="#a2a2e6"/><circle cx="5" cy="6.6" r="1.3" fill="#a2a2e6"/><circle cx="7.5" cy="6.6" r="1.3" fill="#a2a2e6"/><rect x="2" y="9.5" width="3" height="0.8" fill="#9a9a9a"/></svg>
<div class="t" style="left:291.5px;top:163.4px;letter-spacing:0.000px;transform:scaleX(0.821);">Audit IPsec Quick Mode</div>
<div class="t" style="left:495.3px;top:163.4px;letter-spacing:0.129px;transform:scaleX(0.860);">Not Configured</div>
<svg style="position:absolute;left:280px;top:177px" width="11" height="12" viewBox="0 0 11 12"><rect x="5" y="2" width="4.8" height="8.8" fill="#f3f3f3" stroke="#d2d2d2" stroke-width="0.8"/><rect x="0.4" y="0.4" width="7.2" height="9.8" fill="#f7f7f7" stroke="#cdcdcd" stroke-width="0.8"/><rect x="1.2" y="1.8" width="6.8" height="3" fill="#a2a2e6"/><rect x="2.6" y="2.8" width="0.8" height="0.8" fill="#e6e6fa"/><rect x="5" y="2.8" width="0.8" height="0.8" fill="#e6e6fa"/><circle cx="2.5" cy="6.6" r="1.3" fill="#a2a2e6"/><circle cx="5" cy="6.6" r="1.3" fill="#a2a2e6"/><circle cx="7.5" cy="6.6" r="1.3" fill="#a2a2e6"/><rect x="2" y="9.5" width="3" height="0.8" fill="#9a9a9a"/></svg>
<div class="t" style="left:291.5px;top:177.8px;letter-spacing:0.000px;transform:scaleX(0.856);">Audit Logoff</div>
<div class="t" style="left:495.3px;top:177.8px;letter-spacing:0.129px;transform:scaleX(0.860);">Not Configured</div>
<svg style="position:absolute;left:280px;top:192px" width="11" height="12" viewBox="0 0 11 12"><rect x="5" y="2" width="4.8" height="8.8" fill="#f3f3f3" stroke="#d2d2d2" stroke-width="0.8"/><rect x="0.4" y="0.4" width="7.2" height="9.8" fill="#f7f7f7" stroke="#cdcdcd" stroke-width="0.8"/><rect x="1.2" y="1.8" width="6.8" height="3" fill="#a2a2e6"/><rect x="2.6" y="2.8" width="0.8" height="0.8" fill="#e6e6fa"/><rect x="5" y="2.8" width="0.8" height="0.8" fill="#e6e6fa"/><circle cx="2.5" cy="6.6" r="1.3" fill="#a2a2e6"/><circle cx="5" cy="6.6" r="1.3" fill="#a2a2e6"/><circle cx="7.5" cy="6.6" r="1.3" fill="#a2a2e6"/><rect x="2" y="9.5" width="3" height="0.8" fill="#9a9a9a"/></svg>
<div class="t" style="left:291.5px;top:192.3px;letter-spacing:0.000px;transform:scaleX(0.857);">Audit Logon</div>
<div class="t" style="left:495.3px;top:192.3px;letter-spacing:-0.281px;transform:scaleX(0.760);">Success</div>
<svg style="position:absolute;left:280px;top:206px" width="11" height="12" viewBox="0 0 11 12"><rect x="5" y="2" width="4.8" height="8.8" fill="#f3f3f3" stroke="#d2d2d2" stroke-width="0.8"/><rect x="0.4" y="0.4" width="7.2" height="9.8" fill="#f7f7f7" stroke="#cdcdcd" stroke-width="0.8"/><rect x="1.2" y="1.8" width="6.8" height="3" fill="#a2a2e6"/><rect x="2.6" y="2.8" width="0.8" height="0.8" fill="#e6e6fa"/><rect x="5" y="2.8" width="0.8" height="0.8" fill="#e6e6fa"/><circle cx="2.5" cy="6.6" r="1.3" fill="#a2a2e6"/><circle cx="5" cy="6.6" r="1.3" fill="#a2a2e6"/><circle cx="7.5" cy="6.6" r="1.3" fill="#a2a2e6"/><rect x="2" y="9.5" width="3" height="0.8" fill="#9a9a9a"/></svg>
<div class="t" style="left:291.5px;top:206.7px;letter-spacing:0.000px;transform:scaleX(0.823);">Audit Network Policy Server</div>
<div class="t" style="left:495.3px;top:206.7px;letter-spacing:0.129px;transform:scaleX(0.860);">Not Configured</div>
<svg style="position:absolute;left:280px;top:221px" width="11" height="12" viewBox="0 0 11 12"><rect x="5" y="2" width="4.8" height="8.8" fill="#f3f3f3" stroke="#d2d2d2" stroke-width="0.8"/><rect x="0.4" y="0.4" width="7.2" height="9.8" fill="#f7f7f7" stroke="#cdcdcd" stroke-width="0.8"/><rect x="1.2" y="1.8" width="6.8" height="3" fill="#a2a2e6"/><rect x="2.6" y="2.8" width="0.8" height="0.8" fill="#e6e6fa"/><rect x="5" y="2.8" width="0.8" height="0.8" fill="#e6e6fa"/><circle cx="2.5" cy="6.6" r="1.3" fill="#a2a2e6"/><circle cx="5" cy="6.6" r="1.3" fill="#a2a2e6"/><circle cx="7.5" cy="6.6" r="1.3" fill="#a2a2e6"/><rect x="2" y="9.5" width="3" height="0.8" fill="#9a9a9a"/></svg>
<div class="t" style="left:291.5px;top:221.2px;letter-spacing:0.000px;transform:scaleX(0.847);">Audit Other Logon/Logoff Events</div>
<div class="t" style="left:495.3px;top:221.2px;letter-spacing:0.129px;transform:scaleX(0.860);">Not Configured</div>
<svg style="position:absolute;left:280px;top:235px" width="11" height="12" viewBox="0 0 11 12"><rect x="5" y="2" width="4.8" height="8.8" fill="#f3f3f3" stroke="#d2d2d2" stroke-width="0.8"/><rect x="0.4" y="0.4" width="7.2" height="9.8" fill="#f7f7f7" stroke="#cdcdcd" stroke-width="0.8"/><rect x="1.2" y="1.8" width="6.8" height="3" fill="#a2a2e6"/><rect x="2.6" y="2.8" width="0.8" height="0.8" fill="#e6e6fa"/><rect x="5" y="2.8" width="0.8" height="0.8" fill="#e6e6fa"/><circle cx="2.5" cy="6.6" r="1.3" fill="#a2a2e6"/><circle cx="5" cy="6.6" r="1.3" fill="#a2a2e6"/><circle cx="7.5" cy="6.6" r="1.3" fill="#a2a2e6"/><rect x="2" y="9.5" width="3" height="0.8" fill="#9a9a9a"/></svg>
<div class="t" style="left:291.5px;top:235.6px;letter-spacing:0.000px;transform:scaleX(0.822);">Audit Special Logon</div>
<div class="t" style="left:495.3px;top:235.6px;letter-spacing:0.129px;transform:scaleX(0.860);">Not Configured</div><svg class="a" style="left:0;top:0" width="688" height="605" viewBox="0 0 688 605">
<g fill="none" stroke="#f26a2a" stroke-width="1.7" stroke-linecap="round" stroke-linejoin="round">
<path d="M589.9 96.2 L534.6 97.5 M542.4 93.5 L534.6 97.5 L542.4 101.9"/>
<path d="M573 133 L529.6 128.4 M537.9 125.1 L529.6 128.4 L536.5 133"/>
<path d="M572.7 206.2 L527.9 201.3 M535.8 198 L527.9 201.3 L535.3 205.9"/>
<path d="M228.5 480.1 L183.7 476.8 M191.4 473.2 L183.7 476.8 L190.9 481.4"/>
</g></svg><svg class="a" style="left:42px;top:163px" width="10" height="13" viewBox="0 0 10 13"><path d="M0.5 0.5 L0.5 10.3 L2.8 8.3 L4.8 11.8 L6.3 11.1 L4.6 7.8 L8 7.8 Z" fill="#fff" stroke="#5a5a5a" stroke-width="0.85"/></svg></div></body></html>
